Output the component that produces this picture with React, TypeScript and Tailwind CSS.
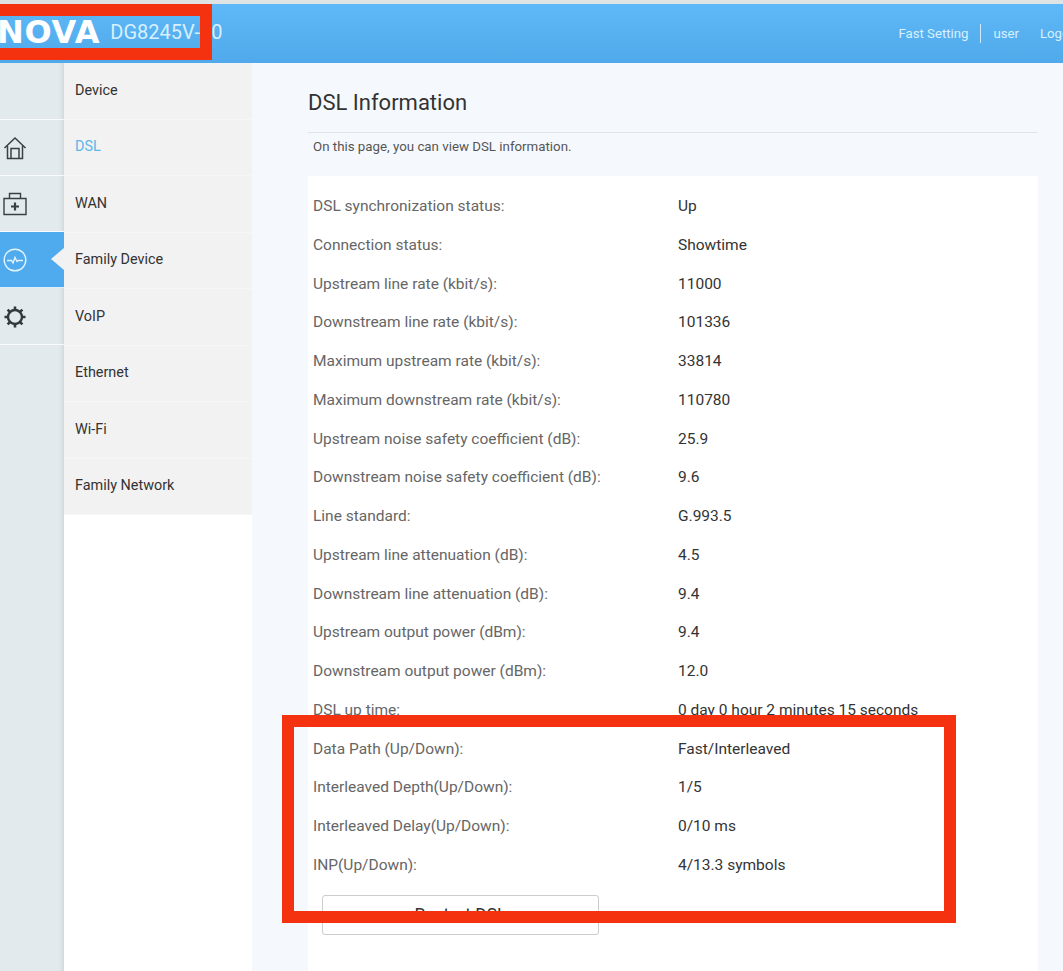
import React, { FC } from "react";

const menuItems = ["Device", "DSL", "WAN", "Family Device", "VoIP", "Ethernet", "Wi-Fi", "Family Network"];

const rows: [string, string][] = [
  ["DSL synchronization status:", "Up"],
  ["Connection status:", "Showtime"],
  ["Upstream line rate (kbit/s):", "11000"],
  ["Downstream line rate (kbit/s):", "101336"],
  ["Maximum upstream rate (kbit/s):", "33814"],
  ["Maximum downstream rate (kbit/s):", "110780"],
  ["Upstream noise safety coefficient (dB):", "25.9"],
  ["Downstream noise safety coefficient (dB):", "9.6"],
  ["Line standard:", "G.993.5"],
  ["Upstream line attenuation (dB):", "4.5"],
  ["Downstream line attenuation (dB):", "9.4"],
  ["Upstream output power (dBm):", "9.4"],
  ["Downstream output power (dBm):", "12.0"],
  ["DSL up time:", "0 day 0 hour 2 minutes 15 seconds"],
  ["Data Path (Up/Down):", "Fast/Interleaved"],
  ["Interleaved Depth(Up/Down):", "1/5"],
  ["Interleaved Delay(Up/Down):", "0/10 ms"],
  ["INP(Up/Down):", "4/13.3 symbols"],
];

const HomeIcon = () => (
  <svg width="24" height="24" viewBox="0 0 24 24" fill="none" stroke="#3a3f42" strokeWidth="1.5">
    <path d="M1.5 12 12 2l10.5 10" />
    <path d="M4.5 10v12.5h15V10" />
    <path d="M8 22.5V12.5h8v10" />
  </svg>
);

const KitIcon = () => (
  <svg width="24" height="24" viewBox="0 0 24 24" fill="none" stroke="#3a3f42" strokeWidth="1.4">
    <path d="M1 6.5h22v16H1z" />
    <path d="M6.5 6.5V1.5h11v5" />
    <path d="M12 10.5v8M8 14.5h8" strokeWidth="2.2" />
  </svg>
);

const PulseIcon = () => (
  <svg width="24" height="24" viewBox="0 0 24 24" fill="none" stroke="#e2f4ff" strokeWidth="1.4">
    <circle cx="12" cy="12" r="10.8" />
    <path d="M4 12.5h4.5l1.5 2.5 2-5.5 2 4 1.2-1h4.8" />
  </svg>
);

const GearIcon = () => (
  <svg width="24" height="24" viewBox="0 0 24 24" fill="none" stroke="#33383b">
    <circle cx="12" cy="12" r="7" strokeWidth="2.4" />
    <path
      d="M12 1.5v3.5M12 19v3.5M1.5 12H5M19 12h3.5M4.6 4.6l2.6 2.6M16.8 16.8l2.6 2.6M19.4 4.6l-2.6 2.6M7.2 16.8l-2.6 2.6"
      strokeWidth="2.6"
    />
  </svg>
);

const App: FC = () => {
  return (
    <div className="relative h-[971px] w-[1063px] overflow-hidden bg-white font-['Roboto',sans-serif]">
      <div className="h-1 bg-[#dfe3e4]" />

      <header className="flex h-[59px] items-center justify-between bg-gradient-to-b from-[#5fb9f8] to-[#4fa9ea]">
        <div className="mb-[4px] flex items-center">
          <span className="ml-[-3px] font-['DejaVu_Sans',sans-serif] text-[32px] font-bold leading-none tracking-[0.7px] text-white">
            NOVA
          </span>
          <span className="ml-[10px] text-[20px] text-[#d6f0ff]">DG8245V-10</span>
        </div>
        <div className="flex items-center text-[13.2px] text-[#d8f0ff]">
          <span>Fast Setting</span>
          <span className="mx-3 h-[19px] w-px bg-[#cfeaff]" />
          <span>user</span>
          <span className="ml-[21px] w-[23px] overflow-hidden">Logout</span>
        </div>
      </header>

      <div className="flex h-[908px]">
        <aside className="w-16 shrink-0 bg-[#e3eaee] shadow-[inset_-5px_0_5px_-4px_#c9d0d4]">
          <div className="h-[57px] border-b border-white/80" />
          <div className="flex h-[56px] items-center border-b border-white/80 pl-[3px]"><HomeIcon /></div>
          <div className="flex h-[56px] items-center border-b border-white/80 pl-[3px]"><KitIcon /></div>
          <div className="relative flex h-[56px] items-center border-b border-white/80 bg-[#4fabed] pl-[3px]">
            <PulseIcon />
            <span className="absolute right-0 top-[16px] border-y-[11px] border-r-[13px] border-y-transparent border-r-[#f2f2f2]" />
          </div>
          <div className="flex h-[57px] items-center border-b border-white/80 pl-[3px] pt-[2px]"><GearIcon /></div>
        </aside>

        <nav className="w-[188px] shrink-0">
          <ul className="bg-[#f2f2f2] text-[14.4px] text-[#333]">
            {menuItems.map((item) => (
              <li
                key={item}
                className={`flex h-[56.5px] items-center border-b border-[#f6f6f6] pl-[11px] ${item === "DSL" ? "text-[#5cb6ea]" : ""}`}
              >
                {item}
              </li>
            ))}
          </ul>
        </nav>

        <main className="flex-1 bg-[#f5f9fd] pl-14 pr-[25px]">
          <h1 className="flex h-[70px] items-center border-b border-[#e2e5e8] pt-[9px] text-[22px] text-[#333]">
            DSL Information
          </h1>
          <p className="mt-[5px] pl-[5px] text-[13.3px] leading-[18px] text-[#555]">On this page, you can view DSL information.</p>

          <section className="mt-[20px] h-[800px] bg-white pl-[5px] pt-[11.5px] text-[15.5px]">
            {rows.map(([label, value]) => (
              <div key={label} className="flex h-[38.74px] items-center">
                <span className="w-[365px] text-[#666]">{label}</span>
                <span className="text-[#333]">{value}</span>
              </div>
            ))}
            <button className="ml-[9px] mt-[10px] h-10 w-[277px] rounded-[3px] border border-[#ccc] bg-white text-[17.5px] text-[#333]">
              Restart DSL
            </button>
          </section>
        </main>
      </div>

      <div className="absolute left-[-12px] top-1 h-14 w-[224px] border-[12px] border-[#f5320f]" />
      <div className="absolute left-[282px] top-[715px] h-[208px] w-[674px] border-[12px] border-[#f5320f]" />
    </div>
  );
};

export default App;
